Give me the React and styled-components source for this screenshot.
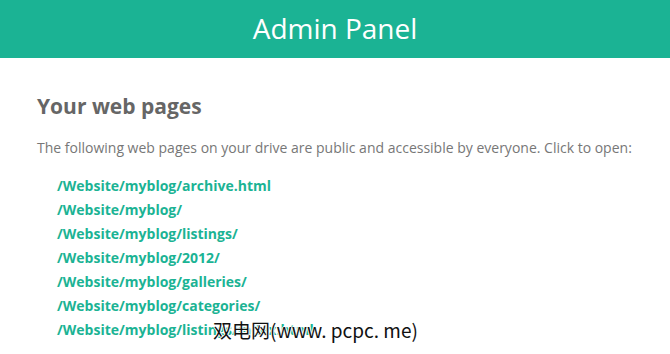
import styled, { createGlobalStyle } from "styled-components"

const GlobalStyle = createGlobalStyle`
  html, body {
    margin: 0;
    padding: 0;
    background: #ffffff;
  }
  body {
    font-family: "Open Sans", "Noto Sans", sans-serif;
  }
`;

const Page = styled.div`
  position: relative;
  width: 670px;
  height: 354px;
  overflow: hidden;
`;

const Header = styled.header`
  height: 58px;
  background-color: #1bb394;
  display: flex;
  align-items: center;
  justify-content: center;
`;

const HeaderTitle = styled.h1`
  margin: 0;
  color: #ffffff;
  font-size: 28px;
  font-weight: 400;
  line-height: 1;
  padding-bottom: 2px;
`;

const Content = styled.main`
  padding: 33px 37px 0;
`;

const Title = styled.h2`
  margin: 0 0 17px;
  font-size: 21px;
  font-weight: 700;
  color: #666666;
  line-height: 30px;
`;

const Desc = styled.p`
  margin: 0 0 16px;
  font-size: 14px;
  color: #777777;
  line-height: 20px;
`;

const List = styled.ul`
  margin: 0;
  padding: 0 0 0 20px;
  list-style: none;
`;

const ListItem = styled.li`
  font-size: 14px;
  line-height: 24px;
`;

const PageLink = styled.a`
  color: #1bb394;
  font-weight: 700;
  text-decoration: none;
`;

const Watermark = styled.div`
  position: absolute;
  left: 213px;
  top: 316px;
  font-family: "Noto Sans CJK SC", "DejaVu Sans", sans-serif;
  font-size: 19px;
  color: #111111;
  white-space: nowrap;
  text-shadow: 1px 0 0 #fff, -1px 0 0 #fff, 0 1px 0 #fff, 0 -1px 0 #fff;
`;

const pages = [
  "/Website/myblog/archive.html",
  "/Website/myblog/",
  "/Website/myblog/listings/",
  "/Website/myblog/2012/",
  "/Website/myblog/galleries/",
  "/Website/myblog/categories/",
  "/Website/myblog/listings/index.html",
]

const App = () => {
  return (
    <Page>
      <GlobalStyle />
      <Header>
        <HeaderTitle>Admin Panel</HeaderTitle>
      </Header>
      <Content>
        <Title>Your web pages</Title>
        <Desc>
          The following web pages on your drive are public and accessible by everyone. Click to open:
        </Desc>
        <List>
          {pages.map((p, i) => (
            <ListItem key={i}>
              <PageLink href="#">{p}</PageLink>
            </ListItem>
          ))}
        </List>
      </Content>
      <Watermark>双电网(www. pcpc. me)</Watermark>
    </Page>
  )
}

export default App
